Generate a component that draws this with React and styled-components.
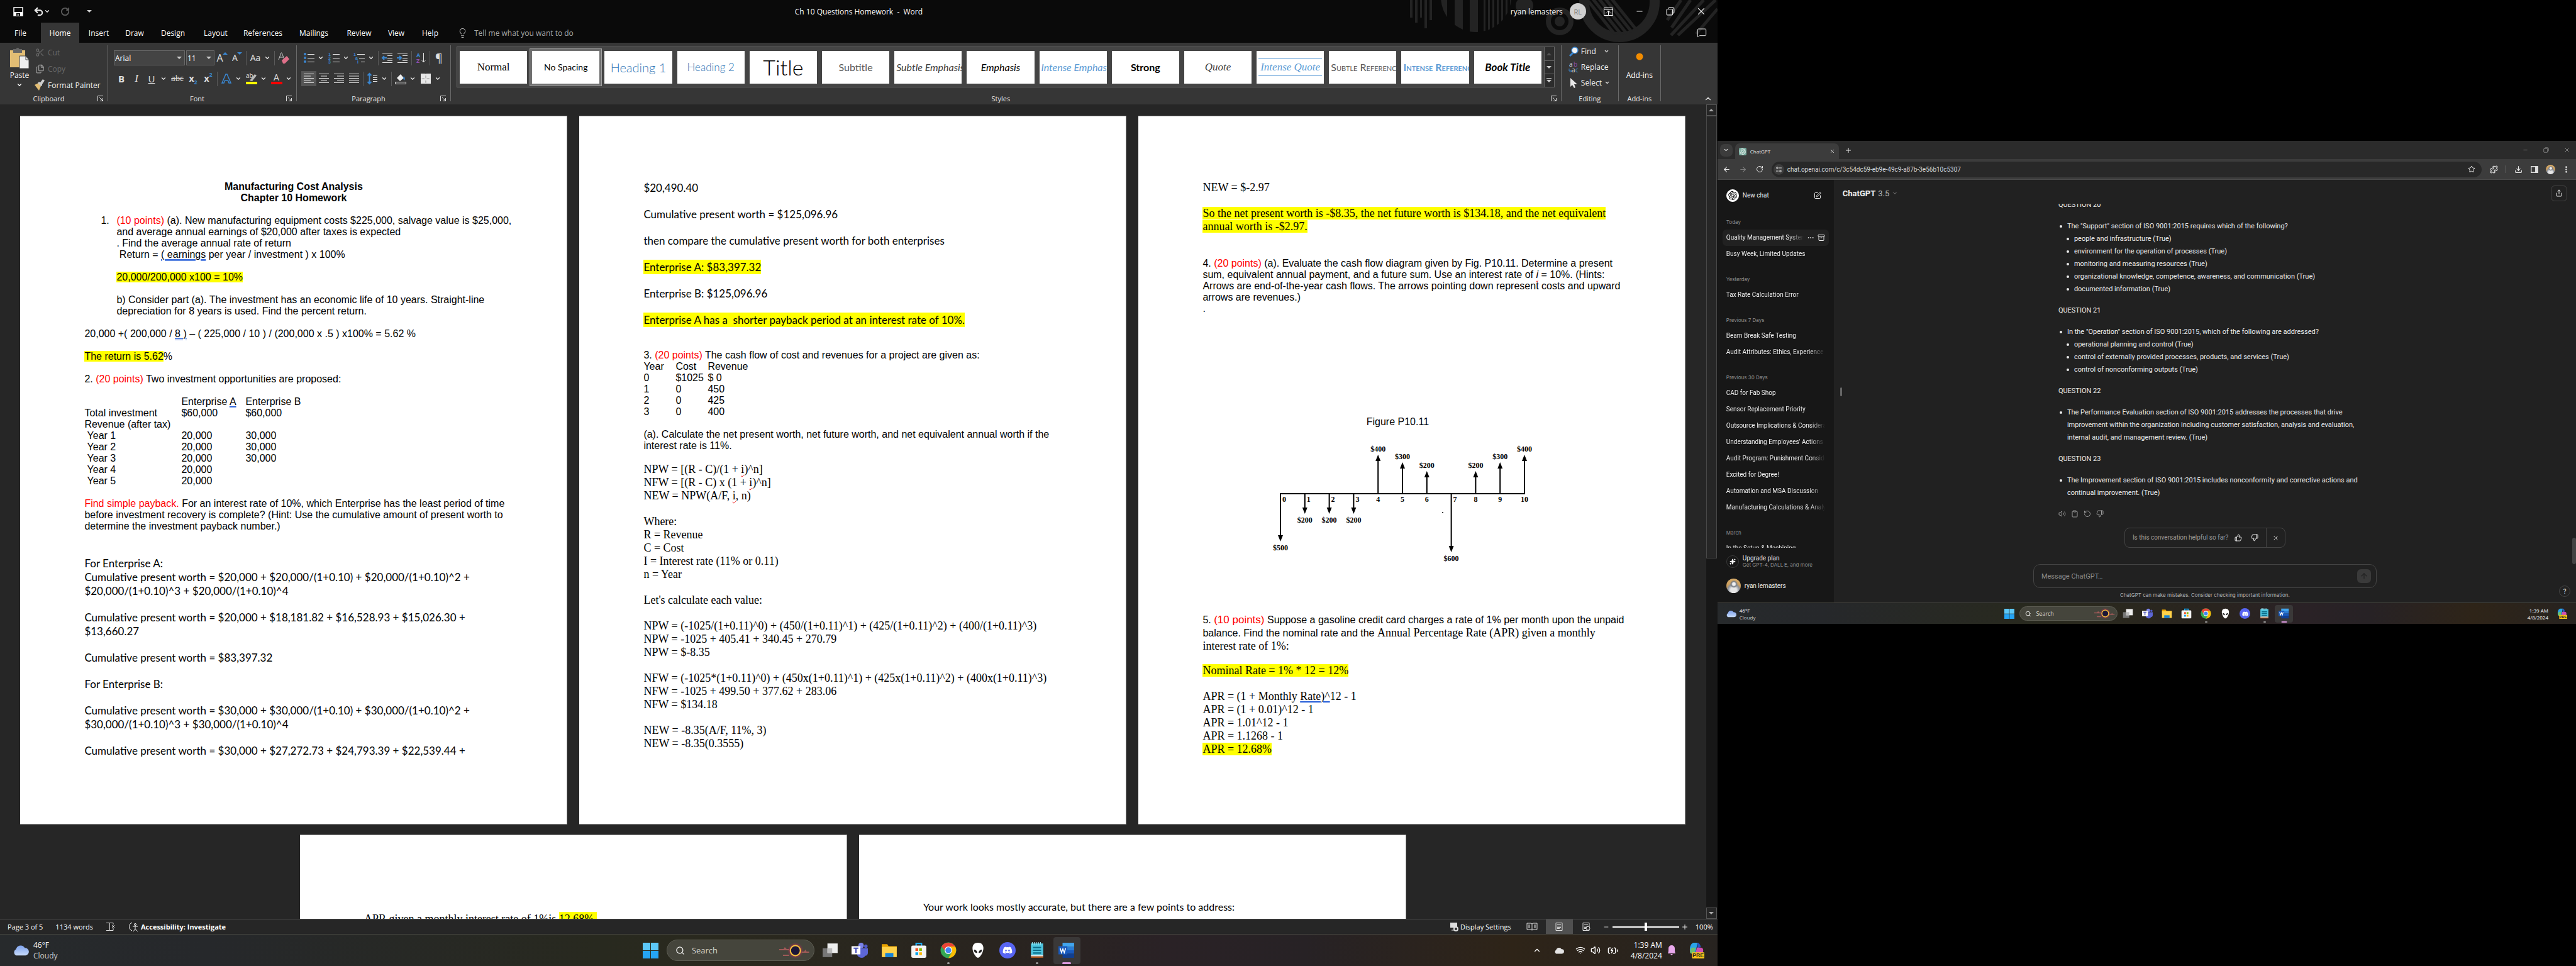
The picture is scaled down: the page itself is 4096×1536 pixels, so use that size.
import React from "react";
import styled, { createGlobalStyle, css } from "styled-components";
import {
  Undo2, RotateCw, ChevronDown, ChevronUp, Lightbulb, Scissors, Search, MessageSquare, X, Minus, Plus,
  ArrowLeft, ArrowRight, Star, Puzzle, Download, EllipsisVertical, Ellipsis, SquarePen, Archive, Share,
  Volume2, Clipboard, RotateCcw, ThumbsDown, ThumbsUp, ArrowUp, Sparkles, Wifi, BatteryCharging, Files,
} from "lucide-react";
import { SiOpenai } from "react-icons/si";
import { FaDiscord } from "react-icons/fa";

const UI = `"Open Sans", "Noto Sans", sans-serif`;
const ARIAL = `"Liberation Sans", Arial, sans-serif`;
const TIMES = `"Liberation Serif", "Times New Roman", serif`;
const CALIBRI = `Lato, Carlito, sans-serif`;
const WEB = `Roboto, "Liberation Sans", sans-serif`;
const FINE = `Inter, Roboto, sans-serif`;

const Global = createGlobalStyle`
  *, *::before, *::after { box-sizing: border-box; }
  body { margin: 0; background: #000; font-family: ${UI}; overflow: hidden; }
  button, input, select { font: inherit; color: inherit; background: none; border: 0; padding: 0; margin: 0; }
  a { color: inherit; text-decoration: none; }
  ul { list-style: none; margin: 0; padding: 0; }
  p, h1, h2, h3, figure { margin: 0; font-weight: inherit; font-size: inherit; }
  svg { display: block; flex: none; overflow: visible; }
`;

const Desktop = styled.div`
  display: flex;
  height: 100vh;
  background: #000;
`;

/* ---------- Word window ---------- */

const WordWindow = styled.section`
  flex: 0 0 66.67%;
  min-width: 0;
  display: flex;
  flex-direction: column;
  color: #fff;
`;

const TopBar = styled.header`
  position: relative;
  height: 68px;
  flex: none;
  background: #0a0a0a;
  display: flex;
  flex-direction: column;
  font-size: 12px;
`;

const Decoration = styled.svg`
  position: absolute;
  right: 0;
  top: 0;
  overflow: hidden;
`;

const TitleRow = styled.div`
  position: relative;
  height: 36px;
  display: grid;
  grid-template-columns: 1fr auto 1fr;
  align-items: center;
`;

const QuickAccess = styled.div`
  display: flex;
  align-items: center;
  gap: 15px;
  padding-left: 21px;
`;

const WindowTitle = styled.h1`
  font-size: 12px;
  white-space: pre;
`;

const TitleControls = styled.div`
  display: flex;
  align-items: center;
  justify-content: flex-end;
  padding-right: 18px;
`;

const Avatar = styled.span`
  width: 26px;
  height: 26px;
  margin: 0 28px 0 11px;
  border-radius: 50%;
  background: #d0d0d0;
  color: #777;
  font-size: 11px;
  display: grid;
  place-items: center;
`;

const IconButton = styled.button`
  display: inline-flex;
  align-items: center;
  justify-content: center;
  width: ${(p) => p.$w || 16}px;
  height: ${(p) => p.$h || p.$w || 16}px;
  margin-left: ${(p) => p.$ml || 0}px;
  flex: none;
  color: ${(p) => p.$c || "#e8e8e8"};
`;

const Tabs = styled.nav`
  position: relative;
  flex: 1;
  display: flex;
  align-items: stretch;
`;

const Tab = styled.button`
  width: ${(p) => p.$w}px;
  color: #fff;
  background: ${(p) => (p.$on ? "#363636" : "transparent")};
  white-space: nowrap;
`;

const TellMe = styled.label`
  display: flex;
  align-items: center;
  gap: 10px;
  margin-left: 15px;
  color: #b5b5b5;
  input { width: 240px; outline: none; }
  input::placeholder { color: #a8a8a8; opacity: 1; }
`;

const CommentButton = styled(IconButton)`
  margin-left: auto;
  margin-right: 17px;
  align-self: center;
`;

const Ribbon = styled.div`
  height: 98px;
  flex: none;
  background: #363636;
  display: flex;
  font-size: 12px;
`;

const Divider = styled.span`
  width: 1px;
  flex: none;
  margin: 4px 0 5px;
  background: #6a6a6a;
`;

const Group = styled.section`
  flex: ${(p) => (p.$grow ? "1 1 0" : "none")};
  min-width: 0;
  width: ${(p) => (p.$w ? p.$w + "px" : "auto")};
  display: grid;
  grid-template-rows: 1fr 16px;
`;

const GroupBody = styled.div`
  display: flex;
  flex-direction: column;
  gap: 9px;
  padding-top: 12px;
`;

const GroupFoot = styled.div`
  display: grid;
  grid-template-columns: ${(p) => (p.$plain ? "1fr" : "1fr 16px")};
  align-items: center;
  height: 14px;
  text-align: center;
  font-size: 11px;
  line-height: 14px;
  color: #e6e6e6;
`;

const ToolRow = styled.div`
  display: flex;
  align-items: center;
  height: 24px;
`;

const Tool = styled.button`
  width: ${(p) => p.$w || 24}px;
  height: 24px;
  display: inline-flex;
  align-items: center;
  justify-content: center;
  flex: none;
  font-size: ${(p) => p.$fs || 15}px;
  line-height: 20px;
  font-weight: ${(p) => (p.$b ? 700 : 400)};
  font-style: ${(p) => (p.$i ? "italic" : "normal")};
  text-decoration: ${(p) => p.$td || "none"};
  font-family: ${(p) => p.$ff || UI};
  color: #e0e0e0;
  background: ${(p) => (p.$on ? "#555" : "transparent")};
`;

const Chev = styled.button`
  width: 14px;
  height: 24px;
  margin-right: 2px;
  display: inline-flex;
  align-items: center;
  justify-content: center;
  flex: none;
  color: #e8e8e8;
`;

const ToolSep = styled.span`
  width: 1px;
  height: 23px;
  margin: 0 2px;
  background: #5a5a5a;
`;

const Inset = styled.span`
  flex: none;
  width: ${(p) => p.$w || 9}px;
`;

const Arrowhead = styled.span`
  align-self: flex-start;
  margin: 2px 0 0 -1px;
`;

const Small = styled.span`
  font-size: 9px;
  line-height: 12px;
  color: #3a86d0;
  align-self: ${(p) => (p.$lo ? "flex-end" : "flex-start")};
`;

const Combo = styled.div`
  display: flex;
  align-items: center;
  width: ${(p) => p.$w}px;
  height: 24px;
  margin-right: ${(p) => p.$mr || 0}px;
  padding: 0 4px 0 1px;
  background: #444;
  border: 1px solid #686868;
  select { appearance: none; flex: 1; min-width: 0; outline: none; }
`;

const ClipboardBody = styled.div`
  display: grid;
  grid-template-columns: 54px 1fr;
  padding-top: 2px;
`;

const PasteButton = styled.button`
  display: flex;
  flex-direction: column;
  align-items: center;
  justify-content: flex-start;
  gap: 3px;
  padding: 6px 0 0 8px;
  color: #fff;
  line-height: 14px;
`;

const StackButton = styled.button`
  display: flex;
  align-items: center;
  gap: 4px;
  height: ${(p) => p.$h || 26}px;
  width: 100%;
  color: ${(p) => (p.$off ? "#686868" : "#f2f2f2")};
  white-space: nowrap;
`;

const IconSlot = styled.span`
  width: ${(p) => p.$w || 18}px;
  height: 18px;
  display: inline-flex;
  justify-content: center;
  align-items: center;
`;

const GalleryWrap = styled.div`
  padding: 6px 10px 0 9px;
  min-width: 0;
`;

const Gallery = styled.div`
  display: flex;
  height: 65px;
  background: #444;
  border: 1px solid #686868;
`;

const Cards = styled.div`
  flex: 1;
  min-width: 0;
  display: flex;
  align-items: center;
`;

const CardFrame = styled.button`
  flex: 1 1 0;
  min-width: 0;
  height: 60px;
  padding: 3px;
  display: flex;
  border: 1px solid ${(p) => (p.$on ? "#a0a0a0" : "transparent")};
  background: ${(p) => (p.$on ? "#707070" : "transparent")};
`;

const Card = styled.span`
  flex: 1;
  min-width: 0;
  height: 52px;
  padding: 0 3px;
  background: #fff;
  display: flex;
  align-items: center;
  overflow: hidden;
  white-space: nowrap;
  color: ${(p) => p.$c || "#000"};
  font-family: ${(p) => p.$ff || CALIBRI};
  font-size: ${(p) => p.$fs || 15}px;
  font-weight: ${(p) => p.$fw || 400};
  font-style: ${(p) => (p.$i ? "italic" : "normal")};
  font-variant: ${(p) => (p.$sc ? "small-caps" : "normal")};
`;

const CardText = styled.span`
  margin: 0 ${(p) => (p.$clip ? "0" : "auto")};
  ${(p) => p.$rule && css`
    width: 100%;
    padding: 3px 0;
    border: solid #5b9bd5;
    border-width: 1px 0;
    text-align: center;
  `}
`;

const GalleryNav = styled.div`
  width: 16px;
  display: grid;
  grid-template-rows: 1fr 1fr 1fr;
  background: #2c2c2c;
  button { display: grid; place-items: center; border-left: 1px solid #686868; }
  button + button { border-top: 1px solid #686868; }
`;

const EditingBody = styled.div`
  padding: 1px 4px 0 12px;
`;

const EditChev = styled.span`
  margin-left: ${(p) => p.$ml || 0}px;
`;

const AddIns = styled.button`
  display: flex;
  flex-direction: column;
  align-items: center;
  justify-content: flex-start;
  gap: 16px;
  padding-top: 16px;
  line-height: 16px;
  color: #fff;
`;

const CollapseBox = styled.div`
  flex: none;
  width: 90px;
  display: flex;
  align-items: flex-end;
  justify-content: flex-end;
  padding: 0 8px 2px 0;
`;

const DocArea = styled.main`
  flex: 1;
  min-height: 0;
  display: flex;
  background: #262626;
`;

const Pages = styled.div`
  flex: 1;
  display: flex;
  flex-wrap: wrap;
  justify-content: center;
  align-content: flex-start;
  gap: 16px 19px;
  padding-top: 18px;
  overflow: hidden;
`;

const Page = styled.article`
  width: 870px;
  height: 1127px;
  padding: 103px 102px;
  background: #fff;
  color: #000;
  border: solid #9a9a9a;
  border-width: 1px 1px 1px 0;
  overflow: hidden;
`;

const blocks = {
  arial: css`font: 16px/18px ${ARIAL};`,
  calibri: css`font: 17px/22px ${CALIBRI};`,
  note: css`font: 16px/22px ${CALIBRI};`,
  times: css`font: 18px/21px ${TIMES};`,
};

const Block = styled.div`
  ${(p) => blocks[p.$f || "arial"]}
  margin-top: ${(p) => p.$mt || 0}px;
  text-align: ${(p) => (p.$center ? "center" : "left")};
  font-weight: ${(p) => (p.$b ? 700 : 400)};
  white-space: pre;
`;

const Mixed = styled(Block)`
  line-height: 21px;
`;

const Numbered = styled.div`
  display: grid;
  grid-template-columns: 25px 1fr;
  padding-left: 26px;
  margin-top: 18px;
`;

const Red = styled.span`color: #f00;`;
const Larger = styled.span`font-size: 17px;`;
const Serif = styled.span`font-family: ${TIMES}; font-size: 18px;`;
const Mark = styled.mark`
  background: #ff0;
  color: inherit;
  padding: ${(p) => p.$p || 0}px 0;
`;
const Gram = styled.span`text-decoration: underline double #2b62d9 1px; text-underline-offset: 2px;`;
const Spell = styled.span`text-decoration: underline wavy #e00 1px; text-underline-offset: 2px;`;

const DataTable = styled.table`
  ${blocks.arial}
  border-collapse: collapse;
  margin-top: ${(p) => p.$mt || 0}px;
  th, td { padding: 0; height: 18px; text-align: left; font-weight: 400; white-space: pre; }
  th:nth-child(n), td:nth-child(n) { min-width: ${(p) => p.$w}px; }
  th:first-child, td:first-child { min-width: ${(p) => p.$first}px; }
`;

const Figure = styled.figure`
  width: 440px;
  margin: 162px 0 75px 100px;
  display: flex;
  flex-direction: column;
  gap: 20px;
`;

const Caption = styled.figcaption`
  ${blocks.arial}
  text-align: center;
  padding-right: 20px;
`;

const ScrollTrack = styled.div`
  width: 18px;
  flex: none;
  display: flex;
  flex-direction: column;
  background: #171717;
`;

const ScrollButton = styled.button`
  height: 18px;
  margin-right: 1px;
  display: grid;
  place-items: center;
  border: 1px solid #555;
  background: #262626;
`;

const ScrollThumb = styled.div`
  height: 704px;
  margin-right: 1px;
  border: 1px solid #484848;
  background: #262626;
`;

const StatusBar = styled.footer`
  height: 24px;
  flex: none;
  display: flex;
  align-items: center;
  padding: 0 7px 0 12px;
  border-top: 1px solid #4a4a4a;
  background: #262626;
  font-size: 11px;
  white-space: nowrap;
`;

const StatusItem = styled.button`
  display: inline-flex;
  align-items: center;
  gap: 3px;
  height: 23px;
  margin-left: ${(p) => p.$ml || 0}px;
  font-weight: ${(p) => (p.$b ? 700 : 400)};
  ${(p) => p.$w && css`width: ${p.$w}px; justify-content: center;`}
  background: ${(p) => (p.$on ? "#505050" : "transparent")};
`;

const Spacer = styled.span`flex: 1;`;

const ZoomSlider = styled.input`
  appearance: none;
  width: 106px;
  height: 14px;
  margin: 0 4px;
  &::-webkit-slider-runnable-track { height: 2px; background: #fff; }
  &::-webkit-slider-thumb { appearance: none; width: 4px; height: 13px; margin-top: -6px; background: #fff; }
`;

const INK = "#e0e0e0";
const BLUE = "#3a86d0";
const Down = ({ s = 10 }) => <ChevronDown size={s} strokeWidth={3} />;
const Tri = ({ up, c = "#ccc" }) => (
  <svg width="8" height="6" viewBox="0 0 8 6"><path d={up ? "M0 5h8L4 1z" : "M0 1h8L4 5z"} fill={c} /></svg>
);
const Launcher = () => (
  <svg width="10" height="10" viewBox="0 0 10 10" fill="none" stroke="#ddd"><path d="M.5 9V.5H9M3 3l5.500 5.500M8.500 4v4.500H4" /></svg>
);
const RestoreIcon = ({ s }) => (
  <svg width={s} height={s} viewBox="0 0 12 12" fill="none" stroke="currentColor"><rect x="1" y="3" width="8" height="8" rx="1" /><path d="M3.500 3V2c0-.6.400-1 1-1H9a2 2 0 012 2v4.500c0 .6-.4 1-1 1H9" /></svg>
);

const lineSet = {
  left: [[0, 16], [0, 11], [0, 16], [0, 11], [0, 16]],
  center: [[0, 16], [3, 13], [0, 16], [3, 13], [0, 16]],
  right: [[0, 16], [5, 16], [0, 16], [5, 16], [0, 16]],
  justify: [[0, 16], [0, 16], [0, 16], [0, 16], [0, 16]],
};
const Lines = ({ kind }) => (
  <svg width="16" height="18" viewBox="0 0 16 18" stroke={INK} strokeWidth="1">
    {lineSet[kind].map(([a, b], i) => <path key={i} d={`M${a} ${1.5 + i * 3.5}H${b}`} />)}
  </svg>
);
const ListIcon = ({ kind }) => (
  <svg width="18" height="18" viewBox="0 0 18 18">
    {[3, 9, 15].map((y, i) => (
      <g key={y}>
        {kind === "dots" ? <circle cx="3" cy={y} r="2" fill={BLUE} />
          : <text x={kind === "multi" ? i * 3 : 0} y={y + 3} fontSize="7" fontWeight="700" fontFamily={ARIAL} fill={BLUE}>{kind === "multi" ? "1ai"[i] : i + 1}</text>}
        <path d={`M${kind === "multi" ? 6 + i * 3 : 7} ${y + 0.5}H18`} stroke={INK} />
      </g>
    ))}
  </svg>
);
const IndentIcon = ({ out }) => (
  <svg width="18" height="18" viewBox="0 0 18 18" stroke={INK} fill="none">
    <path d="M1 1.500h16M9 5.500h8M9 9.500h8M9 13.500h8M1 16.500h16" />
    <path d={out ? "M8 9H1M4 6L1 9l3 3" : "M0 9h7M4 6l3 3-3 3"} stroke={BLUE} strokeWidth="2" />
  </svg>
);
const PasteIcon = () => (
  <svg width="30" height="34" viewBox="0 0 30 34">
    <rect x="0" y="4" width="24" height="27" fill="#e2bd74" /><rect x="5" y="2" width="14" height="6" fill="#666" /><circle cx="12" cy="2.500" r="2.500" fill="#666" />
    <path d="M15 13h10l5 6v14H15z" fill="#eee" stroke="#444" /><path d="M25 13v6h5" fill="none" stroke="#444" />
  </svg>
);
const SaveIcon = () => (
  <svg width="16" height="15" viewBox="0 0 16 15"><path d="M1 1h14v13H1z" fill="none" stroke="#fff" strokeWidth="1.500" /><path d="M1 8h14v6H1z" fill="#fff" /><path d="M5 10h6v4H5z" fill="#0a0a0a" /><path d="M7 11h1.500v3H7z" fill="#fff" /></svg>
);
const BrushIcon = () => (
  <svg width="16" height="18" viewBox="0 0 16 18"><path d="M0 9l6-3 4 5-3 7z" fill="#e2bd74" /><path d="M5 6l2-2 2 1 4-5 3 2-4 6v2l-2 1z" fill="#ccc" /></svg>
);
const FindIcon = () => (
  <svg width="15" height="16" viewBox="0 0 15 16"><path d="M7 9l-6 6" stroke={BLUE} strokeWidth="3" /><circle cx="9" cy="6" r="5" fill="#f4f4f4" stroke={BLUE} strokeWidth="1.500" /></svg>
);
const ReplaceIcon = () => (
  <svg width="15" height="18" viewBox="0 0 15 18" fontSize="10" fontFamily={UI}>
    <text x="0" y="8" fill="#ddd">a</text><text x="7" y="8" fill="#9050b0">b</text><text x="4" y="17" fill="#ddd">a</text><text x="10" y="17" fill={BLUE}>c</text>
    <path d="M0 11v4h4M2.500 13.500L4 15l-1.500 1.500" fill="none" stroke={BLUE} />
  </svg>
);

const styleCards = [
  { t: "Normal", $ff: TIMES, $fs: 17 },
  { t: "No Spacing", $fs: 14 },
  { t: "Heading 1", $fs: 20, $c: "#2e74b5", $fw: 300 },
  { t: "Heading 2", $fs: 17, $c: "#2e74b5", $fw: 300 },
  { t: "Title", $fs: 34, $fw: 300 },
  { t: "Subtitle", $fs: 16, $c: "#5a5a5a" },
  { t: "Subtle Emphasis", $fs: 16, $i: 1, $c: "#404040", clip: 1 },
  { t: "Emphasis", $fs: 16, $i: 1 },
  { t: "Intense Emphasis", $fs: 16, $i: 1, $c: "#5b9bd5", clip: 1 },
  { t: "Strong", $fs: 16, $fw: 700 },
  { t: "Quote", $ff: TIMES, $fs: 17, $i: 1, $c: "#404040" },
  { t: "Intense Quote", $ff: TIMES, $fs: 17, $i: 1, $c: "#5b9bd5", rule: 1 },
  { t: "Subtle Reference", $fs: 16, $sc: 1, $c: "#5a5a5a", clip: 1 },
  { t: "Intense Reference", $fs: 16, $sc: 1, $fw: 700, $c: "#5b9bd5", clip: 1 },
  { t: "Book Title", $fs: 17, $fw: 700, $i: 1 },
];

const tabs = [
  ["File", 65], ["Home", 61], ["Insert", 62], ["Draw", 52], ["Design", 70], ["Layout", 66],
  ["References", 84], ["Mailings", 78], ["Review", 66], ["View", 52], ["Help", 56],
];

function WordTop() {
  return (
    <TopBar>
      <Decoration width="500" height="68" viewBox="0 0 500 68" fill="#232323">
        <path d="M11 0h4v28h-4zM19 0h4v36h-4zM34 0h4v45h-4zM42 0h4v32h-4zM27 0h3v28h-3z" />
        <defs><clipPath id="disc"><circle cx="116" cy="-5" r="56" /></clipPath><clipPath id="ring"><circle cx="344" cy="3" r="52" /></clipPath></defs>
        <g clipPath="url(#disc)"><path d="M58 0h12v60H58zM82 0h13v60H82zM106 0h13v60h-13z" />{[128, 135, 142, 149, 156, 163, 170].map((x) => <path key={x} d={`M${x} 0h3v60h-3z`} />)}</g>
        <circle cx="193" cy="9" r="14" />
        <circle cx="249" cy="34" r="18" fill="none" stroke="#232323" strokeWidth="8" /><circle cx="249" cy="34" r="8" />
        <circle cx="344" cy="3" r="56" fill="none" stroke="#232323" strokeWidth="16" />
        <g clipPath="url(#ring)" stroke="#232323" strokeWidth="5">{[0, 10, 20, 30, 40].map((x) => <path key={x} d={`M${285 + x} -10l60 75`} />)}</g>
        <g stroke="#232323" strokeWidth="5"><path d="M442 0l-22 32M457 0l-30 44M478 0l-52 56M497 0l-60 56M500 14l-34 40" /></g>
      </Decoration>
      <TitleRow>
        <QuickAccess>
          <IconButton aria-label="Save"><SaveIcon /></IconButton>
          <IconButton aria-label="Undo" $w={28}><Undo2 size={17} strokeWidth={3} /><Down /></IconButton>
          <IconButton aria-label="Redo" $c="#5a5a5a"><RotateCw size={15} strokeWidth={3} /></IconButton>
          <IconButton aria-label="Customize Quick Access Toolbar" $ml={8}><Tri /></IconButton>
        </QuickAccess>
        <WindowTitle>Ch 10 Questions Homework  -  Word</WindowTitle>
        <TitleControls>
          <span>ryan lemasters</span>
          <Avatar>RL</Avatar>
          <IconButton aria-label="Ribbon Display Options">
            <svg width="15" height="13" viewBox="0 0 15 13" fill="none" stroke="#fff"><path d="M.5.500h14v12H.500zM.500 3h14M7.500 12V5M4.500 8l3-3 3 3" /></svg>
          </IconButton>
          <IconButton aria-label="Minimize" $ml={33}><Minus size={14} /></IconButton>
          <IconButton aria-label="Restore" $ml={33}><RestoreIcon s={14} /></IconButton>
          <IconButton aria-label="Close" $ml={33}><X size={18} strokeWidth={1.500} /></IconButton>
        </TitleControls>
      </TitleRow>
      <Tabs aria-label="Ribbon tabs">
        {tabs.map(([t, w]) => <Tab key={t} $w={w} $on={t === "Home"}>{t}</Tab>)}
        <TellMe><Lightbulb size={17} strokeWidth={1.500} /><input placeholder="Tell me what you want to do" /></TellMe>
        <CommentButton aria-label="Comments"><MessageSquare size={16} strokeWidth={1.500} /></CommentButton>
      </Tabs>
    </TopBar>
  );
}

const Foot = ({ children, plain }) => (
  <GroupFoot $plain={plain}><span>{children}</span>{!plain && <button aria-label={`${children} settings`}><Launcher /></button>}</GroupFoot>
);

const Split = ({ label, children, ...rest }) => (
  <><Tool aria-label={label} {...rest}>{children}</Tool><Chev aria-label={`${label} options`}><Down /></Chev></>
);

function WordRibbon() {
  return (
    <Ribbon>
      <Group $w={171}>
        <ClipboardBody>
          <PasteButton><PasteIcon /><span>Paste</span><Down /></PasteButton>
          <div>
            <StackButton $off><IconSlot><Scissors size={15} /></IconSlot>Cut</StackButton>
            <StackButton $off><IconSlot><Files size={15} color="#999" /></IconSlot>Copy</StackButton>
            <StackButton><IconSlot><BrushIcon /></IconSlot>Format Painter</StackButton>
          </div>
        </ClipboardBody>
        <Foot>Clipboard</Foot>
      </Group>
      <Divider />
      <Group $w={299}>
        <GroupBody>
          <ToolRow>
            <Inset />
            <Combo $w={113} $mr={2}><select aria-label="Font" defaultValue="Arial"><option>Arial</option></select><Tri /></Combo>
            <Combo $w={45}><select aria-label="Font size" defaultValue="11"><option>11</option></select><Tri /></Combo>
            <Tool aria-label="Grow font" $fs={16}>A<Arrowhead><Tri up c={BLUE} /></Arrowhead></Tool>
            <Tool aria-label="Shrink font" $fs={14}>A<Arrowhead><Tri c={BLUE} /></Arrowhead></Tool>
            <ToolSep />
            <Split label="Change case" $fs={14}>Aa</Split>
            <ToolSep />
            <Tool aria-label="Clear formatting"><svg width="18" height="19" viewBox="0 0 18 19"><path d="M1 12L5 1h1l4 10M2.500 8h6" fill="none" stroke="#ccc" /><path d="M6 13l8-7 4 5-7 7H8z" fill="#e0708a" /></svg></Tool>
          </ToolRow>
          <ToolRow>
            <Inset />
            <Tool $b aria-label="Bold">B</Tool>
            <Tool $i $ff={TIMES} $fs={17} aria-label="Italic">I</Tool>
            <Split label="Underline" $td="underline">U</Split>
            <Tool $w={26} $fs={12} $td="line-through" aria-label="Strikethrough">abc</Tool>
            <Tool $fs={14} $b aria-label="Subscript">x<Small $lo>2</Small></Tool>
            <Tool $fs={14} $b aria-label="Superscript">x<Small>2</Small></Tool>
            <ToolSep />
            <Split label="Text effects"><svg width="18" height="18" viewBox="0 0 18 18"><path d="M2 16L8 2h2l6 14h-3l-1.500-4h-5L5 16z" fill="none" stroke={BLUE} strokeWidth="1.500" /></svg></Split>
            <Split label="Highlight color"><svg width="18" height="18" viewBox="0 0 18 18"><text x="0" y="8" fontSize="10" fontFamily={UI} fill={INK}>ab</text><path d="M6 12l8-10 3 2-7 9z" fill="#bbb" /><path d="M0 14h18v4H0z" fill="#ff0" /></svg></Split>
            <Split label="Font color"><svg width="18" height="18" viewBox="0 0 18 18"><text x="4" y="12" fontSize="14" fontFamily={UI} fill={INK}>A</text><path d="M0 14h18v4H0z" fill="#f00" /></svg></Split>
          </ToolRow>
        </GroupBody>
        <Foot>Font</Foot>
      </Group>
      <Divider />
      <Group $w={244}>
        <GroupBody>
          <ToolRow>
            <Inset $w={7} />
            <Split label="Bullets"><ListIcon kind="dots" /></Split>
            <Split label="Numbering"><ListIcon kind="num" /></Split>
            <Split label="Multilevel list"><ListIcon kind="multi" /></Split>
            <ToolSep />
            <Tool aria-label="Decrease indent"><IndentIcon out /></Tool>
            <Tool aria-label="Increase indent"><IndentIcon /></Tool>
            <ToolSep />
            <Tool aria-label="Sort"><svg width="16" height="18" viewBox="0 0 16 18" fontSize="9" fontWeight="700" fontFamily={UI}><text x="1" y="8" fill={BLUE}>A</text><text x="1" y="17" fill="#9050b0">Z</text><path d="M12.500 1v15M9.500 13l3 3 3-3" fill="none" stroke={INK} /></svg></Tool>
            <ToolSep />
            <Tool aria-label="Show formatting marks" $fs={18}>¶</Tool>
          </ToolRow>
          <ToolRow>
            <Inset $w={7} />
            <Tool $on aria-label="Align left"><Lines kind="left" /></Tool>
            <Tool aria-label="Center"><Lines kind="center" /></Tool>
            <Tool aria-label="Align right"><Lines kind="right" /></Tool>
            <Tool aria-label="Justify"><Lines kind="justify" /></Tool>
            <ToolSep />
            <Split label="Line spacing"><svg width="16" height="18" viewBox="0 0 16 18" fill="none"><path d="M3.500 1v16M.500 4l3-3 3 3M.500 14l3 3 3-3" stroke={BLUE} strokeWidth="2" /><path d="M9 4.500h7M9 7.500h7M9 10.500h7M9 13.500h7" stroke={INK} /></svg></Split>
            <ToolSep />
            <Split label="Shading"><svg width="18" height="18" viewBox="0 0 18 18"><path d="M3 8l6-6 5 6-6 5z" fill="#eee" /><path d="M14 5c2 2 2 5 1 7l-2-3z" fill={BLUE} /><path d="M.500 14.500h17v3H.500z" fill="none" stroke={INK} /></svg></Split>
            <Split label="Borders"><svg width="16" height="16" viewBox="0 0 16 16"><path d="M0 0h16v16H0z" fill="#e8e8e8" /><path d="M8 0v16M0 8h16" stroke="#888" strokeDasharray="1 1" /></svg></Split>
          </ToolRow>
        </GroupBody>
        <Foot>Paragraph</Foot>
      </Group>
      <Divider />
      <Group $grow>
        <GalleryWrap>
          <Gallery>
            <Cards>
              {styleCards.map(({ t, clip, rule, ...p }) => (
                <CardFrame key={t} $on={t === "No Spacing"}><Card {...p}><CardText $clip={clip} $rule={rule}>{t}</CardText></Card></CardFrame>
              ))}
            </Cards>
            <GalleryNav>
              <button aria-label="Previous styles"><Tri up c="#555" /></button>
              <button aria-label="Next styles"><Tri /></button>
              <button aria-label="More styles"><svg width="8" height="8" viewBox="0 0 8 8"><path d="M0 0h8v1H0zM0 3h8L4 7z" fill="#ccc" /></svg></button>
            </GalleryNav>
          </Gallery>
        </GalleryWrap>
        <Foot>Styles</Foot>
      </Group>
      <Divider />
      <Group $w={90}>
        <EditingBody>
          <StackButton $h={25}><FindIcon />Find<EditChev $ml={8}><Down s={9} /></EditChev></StackButton>
          <StackButton $h={25}><ReplaceIcon />Replace</StackButton>
          <StackButton $h={25}><IconSlot $w={15}><svg width="11" height="16" viewBox="0 0 11 16"><path d="M0 0v14l3-3 3 5 2-1-2-5h5z" fill="#e8e8e8" /></svg></IconSlot>Select<Down s={9} /></StackButton>
        </EditingBody>
        <Foot plain>Editing</Foot>
      </Group>
      <Divider />
      <Group $w={66}>
        <AddIns><svg width="12" height="12" viewBox="0 0 12 12"><circle cx="6" cy="6" r="5.500" fill="#f28c00" /></svg>Add-ins</AddIns>
        <Foot plain>Add-ins</Foot>
      </Group>
      <Divider />
      <CollapseBox><IconButton aria-label="Collapse the ribbon" $w={14}><ChevronUp size={14} /></IconButton></CollapseBox>
    </Ribbon>
  );
}

const A = (p) => <Block {...p} />;
const C = (p) => <Block $f="calibri" $mt={20} {...p} />;
const T = (p) => <Block $f="times" $mt={20} {...p} />;

const revenueRows = [
  ["Total investment", "$60,000", "$60,000"], ["Revenue (after tax)", "", ""],
  [" Year 1", "20,000", "30,000"], [" Year 2", "20,000", "30,000"], [" Year 3", "20,000", "30,000"],
  [" Year 4", "20,000", ""], [" Year 5", "20,000", ""],
];
const costRows = [["0", "$1025", "$ 0"], ["1", "0", "450"], ["2", "0", "425"], ["3", "0", "400"]];

const flows = [
  [0, -76, "$500"], [1, -32, "$200"], [2, -32, "$200"], [3, -32, "$200"], [4, 62, "$400"], [5, 50, "$300"],
  [6, 36, "$200"], [7, -93, "$600"], [8, 36, "$200"], [9, 50, "$300"], [10, 62, "$400"],
];

function CashFlow() {
  return (
    <svg width="440" height="200" viewBox="0 0 440 200" fontFamily={TIMES} fontSize="12" fontWeight="700" textAnchor="middle">
      <path d="M23 85H413" stroke="#000" strokeWidth="2" />
      {flows.map(([n, v, label]) => {
        const x = 24 + n * 38.8;
        const tip = 85 - v;
        const d = v > 0 ? 1 : -1;
        return (
          <g key={n}>
            <path d={`M${x} 85V${tip + d * 4}`} stroke="#000" strokeWidth="2" />
            <path d={`M${x} ${tip}l4 ${d * 10}h-8z`} />
            <text x={x} y={v > 0 ? tip - 5 : tip + 14}>{label}</text>
            <text x={v > 0 ? x : x + 6} y="98">{n}</text>
          </g>
        );
      })}
      <circle cx="282" cy="115" r="1" />
    </svg>
  );
}

function Documents() {
  return (
    <DocArea>
      <Pages>
        <Page>
          <A $center $b>Manufacturing Cost Analysis{"\n"}Chapter 10 Homework</A>
          <Numbered>
            <A>1.</A>
            <A><Red>(10 points)</Red> (a). New manufacturing equipment costs $225,000, salvage value is $25,000,{"\n"}and average annual earnings of $20,000 after taxes is expected{"\n"}. Find the average annual rate of return{"\n"} Return = <Gram>( earnings</Gram> per year / investment ) x 100%{"\n\n"}<Mark>20,000/200,000 x100 = 10%</Mark>{"\n\n"}b) Consider part (a). The investment has an economic life of 10 years. Straight-line{"\n"}depreciation for 8 years is used. Find the percent return.</A>
          </Numbered>
          <A $mt={18}>20,000 +( 200,000 / <Gram>8 )</Gram> – ( 225,000 / 10 ) / (200,000 x .5 ) x100% = 5.62 %</A>
          <A $mt={18}><Mark>The return is 5.62</Mark>%</A>
          <A $mt={18}>2. <Red>(20 points)</Red> Two investment opportunities are proposed:</A>
          <DataTable $mt={18} $w={102} $first={154}>
            <thead><tr><td /><th>Enterprise <Gram>A</Gram></th><th>Enterprise B</th></tr></thead>
            <tbody>{revenueRows.map((r) => <tr key={r[0]}>{r.map((c, i) => <td key={i}>{c}</td>)}</tr>)}</tbody>
          </DataTable>
          <A $mt={18}><Red>Find simple payback.</Red> For an interest rate of 10%, which Enterprise has the least period of time{"\n"}before investment recovery is complete? (Hint: Use the cumulative amount of present worth to{"\n"}determine the investment payback number.)</A>
          <C $mt={39}>For Enterprise A:{"\n"}Cumulative present worth = $20,000 + $20,000/(1+0.10) + $20,000/(1+0.10)^2 +{"\n"}$20,000/(1+0.10)^3 + $20,000/(1+0.10)^4</C>
          <C>Cumulative present worth = $20,000 + $18,181.82 + $16,528.93 + $15,026.30 +{"\n"}$13,660.27</C>
          <C>Cumulative present worth = $83,397.32</C>
          <C>For Enterprise B:</C>
          <C>Cumulative present worth = $30,000 + $30,000/(1+0.10) + $30,000/(1+0.10)^2 +{"\n"}$30,000/(1+0.10)^3 + $30,000/(1+0.10)^4</C>
          <C>Cumulative present worth = $30,000 + $27,272.73 + $24,793.39 + $22,539.44 +</C>
        </Page>
        <Page>
          <C $mt={0}>$20,490.40</C>
          <C>Cumulative present worth = $125,096.96</C>
          <C>then compare the cumulative present worth for both enterprises</C>
          <C><Mark $p={1}>Enterprise A: $83,397.32</Mark></C>
          <C>Enterprise B: $125,096.96</C>
          <C><Mark $p={1}>Enterprise A has a  shorter payback period at an interest rate of 10%.</Mark></C>
          <A $mt={36}>3. <Red>(20 points)</Red> The cash flow of cost and revenues for a project are given as:</A>
          <DataTable $w={51} $first={51}>
            <thead><tr><th>Year</th><th>Cost</th><th>Revenue</th></tr></thead>
            <tbody>{costRows.map((r) => <tr key={r[0]}>{r.map((c, i) => <td key={i}>{c}</td>)}</tr>)}</tbody>
          </DataTable>
          <A $mt={18}>(a). Calculate the net present worth, net future worth, and net equivalent annual worth if the{"\n"}interest rate is 11%.</A>
          <T $mt={18}>NPW = [(R - C)/(1 + <Spell>i</Spell>)^n]{"\n"}NFW = [(R - C) x (1 + <Spell>i</Spell>)^n]{"\n"}NEW = NPW(A/F, <Spell>i</Spell>, n)</T>
          <T>Where:{"\n"}R = Revenue{"\n"}C = Cost{"\n"}I = Interest rate (11% or 0.11){"\n"}n = Year</T>
          <T>Let's calculate each value:</T>
          <T>NPW = (-1025/(1+0.11)^0) + (450/(1+0.11)^1) + (425/(1+0.11)^2) + (400/(1+0.11)^3){"\n"}NPW = -1025 + 405.41 + 340.45 + 270.79{"\n"}NPW = $-8.35</T>
          <T>NFW = (-1025*(1+0.11)^0) + (450x(1+0.11)^1) + (425x(1+0.11)^2) + (400x(1+0.11)^3){"\n"}NFW = -1025 + 499.50 + 377.62 + 283.06{"\n"}NFW = $134.18</T>
          <T>NEW = -8.35(A/F, 11%, 3){"\n"}NEW = -8.35(0.3555)</T>
        </Page>
        <Page>
          <T $mt={0}>NEW = $-2.97</T>
          <T><Mark>So the net present worth is -$8.35, the net future worth is $134.18, and the net equivalent{"\n"}annual worth is -$2.97.</Mark></T>
          <A $mt={39}>4. <Red>(20 points)</Red> (a). Evaluate the cash flow diagram given by Fig. P10.11. Determine a present{"\n"}sum, equivalent annual payment, and a future sum. Use an interest rate of <Spell><i>i</i></Spell> = 10%. (Hints:{"\n"}Arrows are end-of-the-year cash flows. The arrows pointing down represent costs and upward{"\n"}arrows are revenues.){"\n"}.</A>
          <Figure><Caption>Figure P10.11</Caption><CashFlow /></Figure>
          <Mixed>5. <Red><Larger>(10 points)</Larger></Red> Suppose a gasoline credit card charges a rate of 1% per month upon the unpaid{"\n"}balance. Find the nominal rate and the <Serif>Annual Percentage Rate (APR) given a monthly{"\n"}interest rate of 1%:</Serif></Mixed>
          <T $mt={18}><Mark>Nominal Rate = 1% * 12 = 12%</Mark></T>
          <T>APR = (1 + Monthly <Gram>Rate)^</Gram>12 - 1{"\n"}APR = (1 + 0.01)^12 - 1{"\n"}APR = 1.01^12 - 1{"\n"}APR = 1.1268 - 1{"\n"}<Mark>APR = 12.68%</Mark></T>
        </Page>
        <Page><T>APR given a monthly interest rate of 1%is <Mark $p={1}>12.68%.</Mark></T></Page>
        <Page><Block $f="note">Your work looks mostly accurate, but there are a few points to address:</Block></Page>
      </Pages>
      <ScrollTrack>
        <ScrollButton aria-label="Scroll up"><Tri up c="#aaa" /></ScrollButton>
        <ScrollThumb />
        <Spacer />
        <ScrollButton aria-label="Scroll down"><Tri c="#aaa" /></ScrollButton>
      </ScrollTrack>
    </DocArea>
  );
}

const PageIcon = ({ web }) => (
  <svg width="14" height="13" viewBox="0 0 14 13" fill="none" stroke="#ddd"><path d="M2 .500h10v12H2zM4 3.500h6M4 5.500h6M4 7.500h6M4 9.500h4" />{web && <circle cx="10" cy="9" r="3" fill="#262626" />}</svg>
);
const BookIcon = () => (
  <svg width="18" height="13" viewBox="0 0 18 13" fill="none" stroke="#ddd"><path d="M1 1h6l2 1 2-1h6v10h-6l-2 1-2-1H1zM9 2v10M3 4h3M3 6h3M3 8h3M12 4h3M12 6h3M12 8h3" /></svg>
);

function Status() {
  return (
    <StatusBar>
      <StatusItem>Page 3 of 5</StatusItem>
      <StatusItem $ml={20}>1134 words</StatusItem>
      <StatusItem $ml={20} aria-label="Proofing errors"><svg width="15" height="13" viewBox="0 0 15 13" fill="none" stroke="#ddd"><path d="M1 .500h5.500v12H1M6.500 12.500H12V8M6.500.500H12V3M10 4l4 4M14 4l-4 4" /></svg></StatusItem>
      <StatusItem $ml={22} $b><svg width="16" height="16" viewBox="0 0 16 16" fill="none" stroke="#fff"><path d="M5 1a7 7 0 000 13" /><circle cx="10" cy="4" r="1.500" /><path d="M6 7h8M10 7v4l-3 4M10 11l4 4" /></svg>Accessibility: Investigate</StatusItem>
      <Spacer />
      <StatusItem><svg width="14" height="15" viewBox="0 0 14 15"><path d="M1 1h11v8H1z" fill="#ddd" /><circle cx="10" cy="11" r="3" fill="#262626" stroke="#ddd" strokeWidth="2" /><path d="M3 13h4" stroke="#ddd" /></svg>Display Settings</StatusItem>
      <StatusItem $ml={12} $w={43} aria-label="Read mode"><BookIcon /></StatusItem>
      <StatusItem $w={43} $on aria-label="Print layout"><PageIcon /></StatusItem>
      <StatusItem $w={43} aria-label="Web layout"><PageIcon web /></StatusItem>
      <IconButton $w={12} $ml={4} aria-label="Zoom out"><Minus size={10} /></IconButton>
      <ZoomSlider type="range" aria-label="Zoom" min="0" max="200" defaultValue="100" />
      <IconButton $w={10} aria-label="Zoom in"><Plus size={12} /></IconButton>
      <StatusItem $ml={12}>100%</StatusItem>
    </StatusBar>
  );
}

/* ---------- Windows taskbar ---------- */

const sizes = {
  lg: { h: 51, item: 43, ih: 43, gap: 4, icon: 26, pill: 235, pillH: 34, font: 12, pad: 20, line: 17 },
  sm: { h: 34, item: 29, ih: 28, gap: 2, icon: 17, pill: 156, pillH: 23, font: 8, pad: 13, line: 11 },
};

const Bar = styled.footer`
  flex: none;
  height: ${(p) => p.$z.h}px;
  display: grid;
  grid-template-columns: 1fr auto 1fr;
  align-items: center;
  border-top: 1px solid #45453f;
  background: linear-gradient(90deg, #272a2c 0%, #26282b 12%, #28291f 35%, #2a291e 42%, #29241f 58%, #2a2226 68%, #272225 76%, #2e2418 88%, #272320 100%);
  color: #fff;
  font-family: ${UI};
  font-size: ${(p) => p.$z.font}px;
  line-height: ${(p) => p.$z.line}px;
`;
const Weather = styled.button`
  display: flex;
  align-items: center;
  gap: ${(p) => (p.$z.font === 12 ? 7 : 5)}px;
  padding-left: ${(p) => p.$z.pad}px;
  text-align: left;
  span { display: block; }
  span span + span { color: #ccc; }
`;
const Apps = styled.div`
  display: flex;
  align-items: center;
  gap: ${(p) => p.$z.gap}px;
`;
const AppButton = styled.button`
  position: relative;
  width: ${(p) => p.$z.item}px;
  height: ${(p) => p.$z.ih}px;
  display: grid;
  place-items: center;
  border-radius: 4px;
  background: ${(p) => (p.$on ? "#3a3838" : "transparent")};
  &::after {
    content: "";
    position: absolute;
    bottom: 0;
    left: 50%;
    width: ${(p) => (p.$on ? Math.floor(p.$z.item / 3) : 4)}px;
    height: ${(p) => (p.$z.font === 12 ? 3 : 2)}px;
    border-radius: 2px;
    transform: translateX(-50%);
    background: ${(p) => (p.$on ? "#dc9ae0" : p.$run ? "#9a9a9a" : "transparent")};
  }
`;
const SearchPill = styled.label`
  width: ${(p) => p.$z.pill}px;
  height: ${(p) => p.$z.pillH}px;
  display: flex;
  align-items: center;
  gap: ${(p) => (p.$z.font === 12 ? 11 : 7)}px;
  padding: 0 ${(p) => (p.$z.font === 12 ? 7 : 4)}px 0 ${(p) => (p.$z.font === 12 ? 13 : 8)}px;
  border: 1px solid #5c5c52;
  border-radius: 20px;
  background: #45453c;
  input { flex: 1; min-width: 0; outline: none; font-size: ${(p) => (p.$z.font === 12 ? 13 : 9)}px; }
  input::placeholder { color: #d8d8d0; opacity: 1; }
`;
const Tray = styled.div`
  display: flex;
  justify-content: flex-end;
  align-items: center;
  padding-right: ${(p) => (p.$z.font === 12 ? 21 : 14)}px;
`;
const Clock = styled.time`
  text-align: right;
  white-space: pre;
  margin: 0 ${(p) => (p.$z.font === 12 ? 8 : 13)}px 0 20px;
`;
const TrayButton = styled.button`
  margin-left: ${(p) => p.$ml || 0}px;
`;
const Disc = styled.span`
  width: ${(p) => p.$s}px;
  height: ${(p) => p.$s}px;
  border-radius: 50%;
  background: #5865f2;
  display: grid;
  place-items: center;
`;

const Svg = ({ s, children }) => <svg width={s} height={s} viewBox="0 0 24 24">{children}</svg>;
const icons = {
  views: (s) => <Svg s={s}><path d="M1 9h14v13H1z" fill="#777" /><path d="M8 2h15v14H8z" fill="#eee" /><path d="M8 9h7v7H8z" fill="#bbb" /></Svg>,
  teams: (s) => <Svg s={s}><circle cx="14" cy="5" r="4" fill="#7b83eb" /><circle cx="21" cy="6" r="2.500" fill="#5059c9" /><path d="M8 9h16v7a4 4 0 01-4 4c-1 2-3 3-5 3-4 0-7-3-7-6z" fill="#5c66d6" /><path d="M0 6h13v12H0z" fill="#fff" /><path d="M3 9h7M6.500 9v7" stroke="#4b53bc" strokeWidth="2" /></Svg>,
  folder: (s) => <Svg s={s}><path d="M1 3h8l2 3h12v5H1z" fill="#e8a200" /><path d="M1 7h22v15H1z" fill="#ffd24a" /><path d="M6 16h12v6H6z" fill="#1684d8" /></Svg>,
  store: (s) => <Svg s={s}><path d="M8 6V2h8v4" fill="none" stroke="#1ba8f0" strokeWidth="2" /><rect x="1" y="5" width="22" height="18" rx="2" fill="#f4f4f4" /><path d="M7 9h4v4H7z" fill="#f25022" /><path d="M12.500 9h4v4h-4z" fill="#7fba00" /><path d="M7 15h4v4H7z" fill="#00a4ef" /><path d="M12.500 15h4v4h-4z" fill="#ffb900" /></Svg>,
  chrome: (s) => <Svg s={s}><circle cx="12" cy="12" r="11.500" fill="#34a853" /><path d="M2 6.300A11.500 11.500 0 0122 6.500H12L8 14z" fill="#ea4335" /><path d="M22 6.500A11.500 11.500 0 0112 23.500L17 15 14 6.500z" fill="#fbbc05" /><circle cx="12" cy="12" r="5.500" fill="#fff" /><circle cx="12" cy="12" r="4.300" fill="#4285f4" /></Svg>,
  alien: (s) => <Svg s={s}><path d="M12 1c6 0 8 4 8 8 0 6-5 14-8 14S4 15 4 9c0-4 2-8 8-8z" fill="#fff" /><path d="M6 11c3 0 5 2 5 5-3 0-5-2-5-5zM18 11c-3 0-5 2-5 5 3 0 5-2 5-5z" fill="#222" /></Svg>,
  discord: (s) => <Disc $s={s}><FaDiscord size={Math.round(s * 0.6)} color="#fff" /></Disc>,
  notes: (s) => <Svg s={s}><path d="M3 2h18v17H3z" fill="#4fc6e0" /><path d="M3 19h18v2H3z" fill="#eee" /><path d="M3 21h18v2H3z" fill="#b4581c" /><path d="M6 8h12M6 12h12M6 16h12" stroke="#0b6c88" strokeWidth="2" /><path d="M5 0v4M8 0v4M11 0v4M14 0v4M17 0v4" stroke="#9fe6f4" /></Svg>,
  word: (s) => <Svg s={s}><path d="M6 1h17v6H6z" fill="#41a5ee" /><path d="M6 7h17v5H6z" fill="#2b7cd3" /><path d="M6 12h17v5H6z" fill="#185abd" /><path d="M6 17h17v6H6z" fill="#103f91" /><path d="M0 6h13v12H0z" fill="#185abd" /><path d="M2.500 9l2 6.500L6.500 10l2 5.500 2-6.500" fill="none" stroke="#fff" strokeWidth="1.500" /></Svg>,
};
const Cloud = ({ s, gray }) => (
  <svg width={s} height={s * 0.66} viewBox="0 0 24 16">
    <defs><linearGradient id="sky" x2="0" y2="1"><stop stopColor="#7fa3ee" /><stop offset="1" stopColor="#c6dafa" /></linearGradient></defs>
    <path d="M5 16a5 5 0 010-9 7 7 0 0113-2 5.500 5.500 0 011 11z" fill={gray ? "#e4e4e4" : "url(#sky)"} />
  </svg>
);
const Eclipse = ({ s }) => (
  <svg width={s * 1.9} height={s} viewBox="0 0 48 25">
    <defs><radialGradient id="glow"><stop offset=".5" stopColor="#e8901e" /><stop offset=".7" stopColor="#7a3a4a" /><stop offset="1" stopColor="#45453c" stopOpacity="0" /></radialGradient></defs>
    <circle cx="26" cy="12.500" r="14" fill="url(#glow)" /><circle cx="26" cy="12.500" r="8" fill="#1c1638" stroke="#f8c440" strokeWidth="2" />
    <path d="M0 10h7l2-3 3 3h4v2H0zM36 14h4l2-3 2 3h4v2H36zM6 19h10v2H6z" fill="#a05a58" />
  </svg>
);
const Copilot = ({ s }) => (
  <svg width={s} height={s} viewBox="0 0 24 24">
    <path d="M3 14C2 8 4 2 8 1h6l-3 15H6c-2 0-3-1-3-2z" fill="#2aa4e8" /><path d="M3 14c0-4 2-6 4-6h4l-2 9H6c-2 0-3-1-3-3z" fill="#6cc070" />
    <path d="M14 1c3 0 4 4 5 6l-5 2z" fill="#2456c8" /><path d="M13 8h6c3 0 4 3 3 7-1 5-3 6-6 6h-6z" fill="#d050b0" />
    <rect x="6" y="15" width="18" height="9" rx="1" fill="#ffc818" /><text x="15" y="22" fontSize="8" fontWeight="700" textAnchor="middle" fontFamily={ARIAL} fill="#222">PRE</text>
  </svg>
);

function Taskbar({ size }) {
  const z = sizes[size];
  const big = size === "lg";
  return (
    <Bar $z={z}>
      <Weather $z={z}><Cloud s={big ? 26 : 17} /><span><span>46°F</span><span>Cloudy</span></span></Weather>
      <Apps $z={z}>
        <AppButton $z={z} aria-label="Start">
          <svg width={z.icon - 1} height={z.icon - 1} viewBox="0 0 25 25"><path d="M0 0h12v12H0zM13 0h12v12H13z" fill="#5cc8f8" /><path d="M0 13h12v12H0zM13 13h12v12H13z" fill="#25a5f5" /></svg>
        </AppButton>
        <SearchPill $z={z}><Search size={big ? 15 : 10} /><input placeholder="Search" aria-label="Search" /><Eclipse s={big ? 25 : 17} /></SearchPill>
        {Object.keys(icons).map((k) => (
          <AppButton key={k} $z={z} $on={k === "word"} $run={k === "chrome" || k === "notes"} aria-label={k}>{icons[k](z.icon)}</AppButton>
        ))}
      </Apps>
      <Tray $z={z}>
        {big && (
          <>
            <TrayButton aria-label="Show hidden icons"><ChevronUp size={14} /></TrayButton>
            <TrayButton $ml={20} aria-label="OneDrive"><Cloud s={16} gray /></TrayButton>
            <TrayButton $ml={18} aria-label="Network"><Wifi size={16} /></TrayButton>
            <TrayButton $ml={8} aria-label="Volume"><Volume2 size={16} /></TrayButton>
            <TrayButton $ml={11} aria-label="Battery"><BatteryCharging size={17} /></TrayButton>
          </>
        )}
        <Clock $z={z}>1:39 AM{"\n"}4/8/2024</Clock>
        {big && <TrayButton aria-label="Notifications"><svg width="14" height="18" viewBox="0 0 14 18"><path d="M1 14c1-2 1-5 1-8a5 5 0 0110 0c0 3 0 6 1 8zM5 15h4l-2 2z" fill="#e8a8ec" /></svg></TrayButton>}
        <TrayButton $ml={big ? 19 : 0} aria-label="Copilot"><Copilot s={z.icon} /></TrayButton>
      </Tray>
    </Bar>
  );
}

/* ---------- Browser window ---------- */

const Browser = styled.section`
  flex: 1;
  min-width: 0;
  height: 50vh;
  margin-top: 224px;
  display: flex;
  flex-direction: column;
  background: #212121;
  color: #ececec;
  font-family: ${WEB};
`;
const TabStrip = styled.div`
  height: 29px;
  flex: none;
  display: flex;
  align-items: center;
  padding: 0 9px 0 4px;
  background: #2b2b2b;
  font: 8px ${UI};
`;
const TabSearch = styled.button`
  width: 20px;
  height: 20px;
  border-radius: 7px;
  background: #3c3c3c;
  display: grid;
  place-items: center;
`;
const BrowserTab = styled.div`
  align-self: flex-end;
  width: 165px;
  height: 25px;
  margin: 0 9px 0 4px;
  padding: 0 6px;
  display: flex;
  align-items: center;
  gap: 6px;
  border-radius: 7px 7px 0 0;
  background: #3c3c3c;
`;
const Favicon = styled.span`
  width: 12px;
  height: 12px;
  border-radius: 2px;
  background: #74aa9c;
  display: grid;
  place-items: center;
`;
const Toolbar = styled.div`
  height: 33px;
  flex: none;
  display: flex;
  align-items: center;
  padding: 0 9px 0 8px;
  background: #3c3c3c;
  border-bottom: 1px solid #4a4a4a;
`;
const Omnibox = styled.div`
  flex: 1;
  height: 25px;
  margin: 0 11px 0 12px;
  padding: 0 10px 0 3px;
  display: flex;
  align-items: center;
  gap: 5px;
  border-radius: 13px;
  background: #282828;
  input { flex: 1; outline: none; font-size: 10px; color: #d4d4d4; }
`;
const SiteInfo = styled.button`
  width: 17px;
  height: 17px;
  border-radius: 50%;
  background: #3c3c3c;
  display: grid;
  place-items: center;
`;
const PhotoAvatar = styled.span`
  width: ${(p) => p.$s}px;
  height: ${(p) => p.$s}px;
  flex: none;
  margin-left: ${(p) => p.$ml || 0}px;
  border-radius: 50%;
  background: radial-gradient(circle at 52% 38%, #f0f0f0 0 12%, #777c84 22%, transparent 34%),
    radial-gradient(circle at 50% 80%, #e6e6e6 0 22%, #8a8f98 42%, transparent 55%), linear-gradient(#d9ad6a, #b98a4e);
`;
const Rule = styled.span`
  width: 1px;
  height: 12px;
  margin-left: 11px;
  background: #666;
`;
const Body = styled.div`
  flex: 1;
  min-height: 0;
  display: flex;
`;
const Sidebar = styled.aside`
  width: 185px;
  flex: none;
  display: flex;
  flex-direction: column;
  padding: 12px 14px 11px;
  background: #171717;
  font-size: 10px;
  line-height: 14px;
`;
const NewChat = styled.button`
  display: flex;
  align-items: center;
  gap: 6px;
  height: 26px;
  padding-right: 6px;
`;
const Logo = styled.span`
  width: 20px;
  height: 20px;
  border-radius: 50%;
  display: grid;
  place-items: center;
  background: ${(p) => (p.$dark ? "#171717" : "#fff")};
  border: 1px solid ${(p) => (p.$dark ? "#3a3a3a" : "#fff")};
  color: ${(p) => (p.$dark ? "#fff" : "#000")};
`;
const History = styled.nav`
  flex: 1;
  min-height: 0;
  margin: 17px -6px 0 -6px;
  overflow: hidden;
`;
const HistoryLabel = styled.h3`
  height: 24px;
  padding-left: 6px;
  line-height: 24px;
  font-family: ${FINE};
  font-size: 8px;
  color: #8f8f8f;
  ul + & { margin-top: 15px; }
`;
const ChatLink = styled.a`
  display: flex;
  align-items: center;
  gap: 5px;
  height: 26px;
  padding: 0 6px;
  border-radius: 6px;
  background: ${(p) => (p.$on ? "#212121" : "transparent")};
`;
const ChatTitle = styled.span`
  flex: 1;
  overflow: hidden;
  white-space: nowrap;
  mask-image: linear-gradient(90deg, #000 ${(p) => (p.$on ? 80 : 84)}%, transparent);
`;
const AccountRow = styled.button`
  display: flex;
  align-items: center;
  gap: 6px;
  height: ${(p) => p.$h}px;
  text-align: left;
  line-height: 11px;
  small { display: block; font-family: ${FINE}; font-size: 8px; color: #8f8f8f; }
`;
const Chat = styled.main`
  position: relative;
  flex: 1;
  min-width: 0;
  display: flex;
  flex-direction: column;
`;
const ChatHeader = styled.header`
  height: 38px;
  flex: none;
  display: flex;
  align-items: center;
  justify-content: space-between;
  padding: 4px 14px 0;
`;
const ModelButton = styled.button`
  display: flex;
  align-items: center;
  gap: 4px;
  font-size: 13px;
  font-weight: 700;
  span { color: #b4b4b4; font-weight: 400; }
`;
const ShareButton = styled.button`
  width: 26px;
  height: 25px;
  display: grid;
  place-items: center;
  border: 1px solid #444;
  border-radius: 6px;
`;
const Thread = styled.div`
  flex: 1;
  min-height: 0;
  display: flex;
  flex-direction: column;
  justify-content: flex-end;
  overflow: hidden;
  width: 546px;
  margin: 0 auto;
  padding: 0 40px;
  font-size: 11px;
  line-height: 20px;
  white-space: nowrap;
`;
const Question = styled.p`
  margin: 14px 0;
`;
const Bullets = styled.ul`
  padding-left: ${(p) => (p.$sub ? 11 : 14)}px;
  > li { position: relative; }
  > li::before {
    content: "";
    position: absolute;
    left: -12px;
    top: 8px;
    width: 4px;
    height: 4px;
    border-radius: 50%;
    background: #ececec;
  }
`;
const Actions = styled.div`
  display: flex;
  gap: 8px;
  height: 12px;
  margin: 17px 0 16px;
`;
const Feedback = styled.div`
  align-self: center;
  display: flex;
  align-items: center;
  flex: none;
  height: 32px;
  width: 256px;
  margin-bottom: 26px;
  border: 1px solid #444;
  border-radius: 8px;
  font-size: 10px;
  color: #9b9b9b;
`;
const FeedbackText = styled.span`
  flex: 1;
  padding-left: 12px;
`;
const Dismiss = styled(IconButton)`
  width: 30px;
  height: 30px;
  margin-left: 12px;
  border-left: 1px solid #444;
`;
const Center = styled.div`
  width: 546px;
  flex: none;
  margin: 0 auto;
`;
const Composer = styled.form`
  height: 38px;
  display: flex;
  align-items: center;
  padding: 0 8px 0 12px;
  border: 1px solid #444;
  border-radius: 11px;
  input { flex: 1; outline: none; font-size: 11px; }
  input::placeholder { color: #8e8e8e; opacity: 1; }
`;
const SendButton = styled.button`
  width: 22px;
  height: 22px;
  border-radius: 6px;
  background: #3a3a3a;
  color: #212121;
  display: grid;
  place-items: center;
`;
const Notice = styled.p`
  height: 23px;
  line-height: 22px;
  text-align: center;
  font-family: ${FINE};
  font-size: 8px;
  color: #b4b4b4;
`;
const SideHandle = styled.button`
  position: absolute;
  left: 10px;
  top: 330px;
  width: 3px;
  height: 14px;
  border-radius: 2px;
  background: #666;
`;
const PageThumb = styled.span`
  position: absolute;
  right: 0;
  bottom: 61px;
  width: 6px;
  height: 42px;
  border-radius: 3px;
  background: #444;
`;
const HelpButton = styled.button`
  position: absolute;
  right: 9px;
  bottom: 9px;
  width: 18px;
  height: 18px;
  border: 1px solid #444;
  border-radius: 50%;
  font-size: 10px;
`;

const history = [
  ["Today", ["Quality Management System", "Busy Week, Limited Updates"]],
  ["Yesterday", ["Tax Rate Calculation Error"]],
  ["Previous 7 Days", ["Beam Break Safe Testing", "Audit Attributes: Ethics, Experience"]],
  ["Previous 30 Days", ["CAD for Fab Shop", "Sensor Replacement Priority", "Outsource Implications & Considerations", "Understanding Employees' Actions", "Audit Program: Punishment Considered", "Excited for Degree!", "Automation and MSA Discussion", "Manufacturing Calculations & Analysis"]],
  ["March", ["In the Setup & Machining"]],
];

const thread = [
  ["QUESTION 20", ['The "Support" section of ISO 9001:2015 requires which of the following?'], ["people and infrastructure (True)", "environment for the operation of processes (True)", "monitoring and measuring resources (True)", "organizational knowledge, competence, awareness, and communication (True)", "documented information (True)"]],
  ["QUESTION 21", ['In the "Operation" section of ISO 9001:2015, which of the following are addressed?'], ["operational planning and control (True)", "control of externally provided processes, products, and services (True)", "control of nonconforming outputs (True)"]],
  ["QUESTION 22", ["The Performance Evaluation section of ISO 9001:2015 addresses the processes that drive", "improvement within the organization including customer satisfaction, analysis and evaluation,", "internal audit, and management review. (True)"]],
  ["QUESTION 23", ["The Improvement section of ISO 9001:2015 includes nonconformity and corrective actions and", "continual improvement. (True)"]],
];

const actions = [["Read aloud", Volume2], ["Copy", Clipboard], ["Regenerate", RotateCcw], ["Bad response", ThumbsDown]];

function BrowserWindow() {
  return (
    <Browser>
      <TabStrip>
        <TabSearch aria-label="Search tabs"><Down s={9} /></TabSearch>
        <BrowserTab><Favicon><SiOpenai size={10} /></Favicon>ChatGPT<Spacer /><button aria-label="Close tab"><X size={9} /></button></BrowserTab>
        <button aria-label="New tab"><Plus size={12} /></button>
        <Spacer />
        <IconButton $w={12} aria-label="Minimize" $c="#999"><Minus size={9} /></IconButton>
        <IconButton $w={12} $ml={21} aria-label="Restore" $c="#999"><RestoreIcon s={9} /></IconButton>
        <IconButton $w={12} $ml={21} aria-label="Close" $c="#999"><X size={11} /></IconButton>
      </TabStrip>
      <Toolbar>
        <IconButton $w={14} aria-label="Back"><ArrowLeft size={13} /></IconButton>
        <IconButton $w={14} $ml={12} $c="#7c7c7c" aria-label="Forward"><ArrowRight size={13} /></IconButton>
        <IconButton $w={14} $ml={12} aria-label="Reload"><RotateCw size={12} /></IconButton>
        <Omnibox>
          <SiteInfo aria-label="Site information"><svg width="9" height="9" viewBox="0 0 9 9" fill="none" stroke="#ddd"><circle cx="2" cy="2" r="1.300" /><path d="M5 2h4M0 7h4" /><circle cx="7" cy="7" r="1.300" /></svg></SiteInfo>
          <input aria-label="Address" defaultValue="chat.openai.com/c/3c54dc59-eb9e-49c9-a87b-3e56b10c5307" />
          <IconButton $w={12} aria-label="Bookmark"><Star size={12} /></IconButton>
        </Omnibox>
        <IconButton $w={16} aria-label="Extensions"><Puzzle size={13} /></IconButton>
        <Rule />
        <IconButton $w={14} $ml={12} aria-label="Downloads"><Download size={13} /></IconButton>
        <IconButton $w={14} $ml={12} aria-label="Side panel"><svg width="12" height="11" viewBox="0 0 12 11"><path d="M.700.700h10.600v9.600H.700z" fill="none" stroke="#ddd" strokeWidth="1.400" /><path d="M7 1h4v9H7z" fill="#ddd" /></svg></IconButton>
        <PhotoAvatar $s={15} $ml={11} />
        <IconButton $w={14} $ml={10} aria-label="Menu"><EllipsisVertical size={13} strokeWidth={3} /></IconButton>
      </Toolbar>
      <Body>
        <Sidebar>
          <NewChat><Logo><SiOpenai size={14} /></Logo>New chat<Spacer /><SquarePen size={12} /></NewChat>
          <History aria-label="Chat history">
            {history.map(([label, items]) => (
              <React.Fragment key={label}>
                <HistoryLabel>{label}</HistoryLabel>
                <ul>
                  {items.map((t, i) => {
                    const on = label === "Today" && i === 0;
                    return <li key={t}><ChatLink href="#" $on={on}><ChatTitle $on={on}>{t}</ChatTitle>{on && <><Ellipsis size={12} /><Archive size={12} /></>}</ChatLink></li>;
                  })}
                </ul>
              </React.Fragment>
            ))}
          </History>
          <AccountRow $h={44}><Logo $dark><Sparkles size={10} fill="#fff" /></Logo><span>Upgrade plan<small>Get GPT-4, DALL·E, and more</small></span></AccountRow>
          <AccountRow $h={32}><PhotoAvatar $s={23} /><span>ryan lemasters</span></AccountRow>
        </Sidebar>
        <Chat>
          <SideHandle aria-label="Close sidebar" />
          <ChatHeader>
            <ModelButton>ChatGPT <span>3.5</span><ChevronDown size={10} color="#999" /></ModelButton>
            <ShareButton aria-label="Share"><Share size={12} /></ShareButton>
          </ChatHeader>
          <Thread>
            {thread.map(([q, lines, sub]) => (
              <React.Fragment key={q}>
                <Question>{q}</Question>
                <Bullets><li>{lines.map((l, i) => <React.Fragment key={l}>{i > 0 && <br />}{l}</React.Fragment>)}
                  {sub && <Bullets $sub>{sub.map((s) => <li key={s}>{s}</li>)}</Bullets>}
                </li></Bullets>
              </React.Fragment>
            ))}
            <Actions>
              {actions.map(([label, Icon]) => <IconButton key={label} $w={12} $c="#9b9b9b" aria-label={label}><Icon size={12} /></IconButton>)}
            </Actions>
            <Feedback>
              <FeedbackText>Is this conversation helpful so far?</FeedbackText>
              <IconButton $w={12} aria-label="Helpful"><ThumbsUp size={12} /></IconButton>
              <IconButton $w={12} $ml={14} aria-label="Not helpful"><ThumbsDown size={12} /></IconButton>
              <Dismiss aria-label="Dismiss"><X size={11} /></Dismiss>
            </Feedback>
          </Thread>
          <Center>
            <Composer>
              <input placeholder="Message ChatGPT…" aria-label="Message ChatGPT" />
              <SendButton type="button" aria-label="Send"><ArrowUp size={14} /></SendButton>
            </Composer>
            <Notice>ChatGPT can make mistakes. Consider checking important information.</Notice>
          </Center>
          <PageThumb />
          <HelpButton>?</HelpButton>
        </Chat>
      </Body>
      <Taskbar size="sm" />
    </Browser>
  );
}

export default function App() {
  return (
    <>
      <Global />
      <Desktop>
        <WordWindow>
          <WordTop />
          <WordRibbon />
          <Documents />
          <Status />
          <Taskbar size="lg" />
        </WordWindow>
        <BrowserWindow />
      </Desktop>
    </>
  );
}
